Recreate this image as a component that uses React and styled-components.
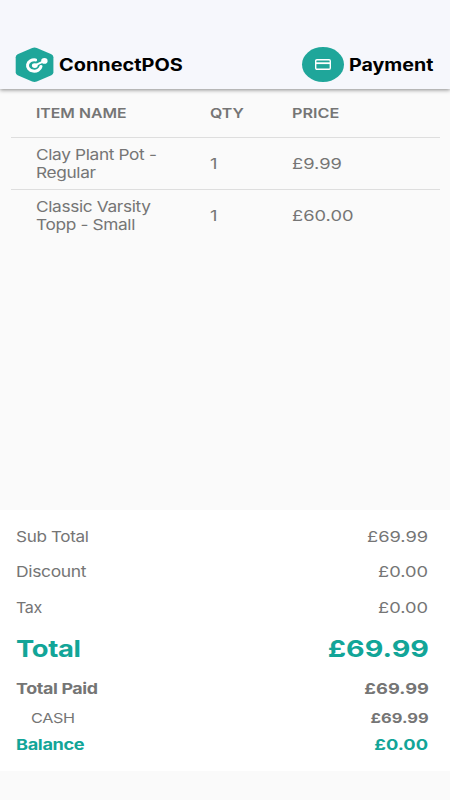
import React from "react";
import styled, { createGlobalStyle } from "styled-components";

const COLUMNS = [
  { label: "ITEM NAME", stretch: 1.17 },
  { label: "QTY", stretch: 1.18 },
  { label: "PRICE", stretch: 1.2 },
];

const ITEMS = [
  { name: ["Clay Plant Pot -", "Regular"], qty: "1", price: "£9.99" },
  { name: ["Classic Varsity", "Topp - Small"], qty: "1", price: "£60.00" },
];

const TOTALS = [
  { label: "Sub Total", value: "£69.99", height: 35, size: 15, stretch: 1.14 },
  { label: "Discount", value: "£0.00", height: 36, size: 15, stretch: 1.165 },
  { label: "Tax", value: "£0.00", height: 35, size: 15, stretch: 1.07 },
  { label: "Total", value: "£69.99", height: 47, size: 23.5, stretch: 1.165, bold: true, accent: true },
  { label: "Total Paid", value: "£69.99", height: 33, size: 15, stretch: 1.19, bold: true },
  { label: "CASH", value: "£69.99", height: 26, size: 13.5, stretch: 1.2, boldValue: true, indent: 15.5 },
  { label: "Balance", value: "£0.00", height: 27, size: 15, stretch: 1.21, bold: true, accent: true },
];

function LogoMark() {
  return (
    <svg width="40" height="36" viewBox="0 0 40 36">
      <path
        d="M17.2 0.9Q19.5 0 21.8 0.9L36.4 7.2Q38.4 8.2 38.4 10.2V25.2Q38.4 27.2 36.4 28.2L21.8 34.5Q19.5 35.4 17.2 34.5L2.6 28.2Q0.7 27.2 0.7 25.2V10.2Q0.7 8.2 2.6 7.2Z"
        fill="#1fa69a"
      />
      <path d="M20.6 12.9A6.8 5.7 0 1 0 26 19.4" fill="none" stroke="#fff" strokeWidth="3" strokeLinecap="round" />
      <path d="M20 18.4L29 14.2" stroke="#fff" strokeWidth="2" />
      <ellipse cx="19.8" cy="18.6" rx="2.9" ry="2.4" fill="#fff" />
      <ellipse cx="29.4" cy="13.9" rx="3.2" ry="2.8" fill="#fff" />
    </svg>
  );
}

function CardIcon() {
  return (
    <svg width="16" height="11" viewBox="0 0 16 11">
      <rect x="0.7" y="0.7" width="14.6" height="9.6" rx="1.2" fill="none" stroke="#fff" strokeWidth="1.4" />
      <path d="M1 4.2H15" stroke="#fff" strokeWidth="1.8" />
    </svg>
  );
}

export default function App() {
  return (
    <Page>
      <GlobalStyle />
      <Header>
        <Group>
          <LogoMark />
          <Wide $size={17} $weight={700} $stretch={1.17}>
            ConnectPOS
          </Wide>
        </Group>
        <Group $gap={5}>
          <Badge>
            <CardIcon />
          </Badge>
          <Wide $size={17} $weight={700} $stretch={1.155}>
            Payment
          </Wide>
        </Group>
      </Header>
      <Table>
        <HeadRow>
          {COLUMNS.map((col) => (
            <Wide key={col.label} $size={13.5} $weight={600} $stretch={col.stretch}>
              {col.label}
            </Wide>
          ))}
        </HeadRow>
        {ITEMS.map((item) => (
          <ItemRow key={item.price}>
            <Name>
              {item.name.map((line) => (
                <Wide key={line} $size={15} $stretch={1.15} $tracking={-0.3}>
                  {line}
                </Wide>
              ))}
            </Name>
            <Wide $size={15}>{item.qty}</Wide>
            <Wide $size={15}>{item.price}</Wide>
          </ItemRow>
        ))}
      </Table>
      <Summary>
        {TOTALS.map((row) => (
          <TotalRow key={row.label} $height={row.height} $indent={row.indent} $accent={row.accent}>
            <Wide $size={row.size} $weight={row.bold ? 700 : 400} $stretch={row.stretch} $tracking={-0.3}>
              {row.label}
            </Wide>
            <Wide $end $size={row.size} $weight={row.bold || row.boldValue ? 700 : 400}>
              {row.value}
            </Wide>
          </TotalRow>
        ))}
      </Summary>
    </Page>
  );
}

const GlobalStyle = createGlobalStyle`
  * { box-sizing: border-box; }
  body { margin: 0; }
`;

const Page = styled.main`
  display: flex;
  flex-direction: column;
  width: 450px;
  height: 800px;
  padding-bottom: 29px;
  overflow: hidden;
  background: #fafafa;
  color: #757575;
  font-family: Inter, sans-serif;
`;

// Expanded lettering: the face is widened horizontally.
const Wide = styled.span`
  display: block;
  width: max-content;
  font-size: ${(p) => p.$size}px;
  font-weight: ${(p) => p.$weight || 400};
  line-height: 18px;
  letter-spacing: ${(p) => p.$tracking || 0}px;
  white-space: nowrap;
  transform: scaleX(${(p) => p.$stretch || 1.22});
  transform-origin: ${(p) => (p.$end ? "right" : "left")} center;
`;

const Header = styled.header`
  display: flex;
  justify-content: space-between;
  flex: none;
  height: 89px;
  padding: 47px 28px 0 15px;
  background: #f6f7fc;
  color: #000;
  box-shadow: 0 1px 4px rgba(0, 0, 0, 0.45);
`;

const Group = styled.div`
  display: flex;
  align-items: center;
  gap: ${(p) => p.$gap || 4}px;
  height: 36px;
`;

const Badge = styled.span`
  display: flex;
  align-items: center;
  justify-content: center;
  width: 42px;
  height: 35px;
  margin-bottom: 1px;
  border-radius: 50%;
  background: #1fa69a;
`;

const Table = styled.section`
  flex: 1;
  padding: 0 10px 0 11px;
`;

const HeadRow = styled.div`
  display: grid;
  grid-template-columns: 174px 82.4px 1fr;
  align-items: center;
  height: 48px;
  padding-left: 25px;
`;

const ItemRow = styled(HeadRow)`
  height: 52px;
  border-top: 1px solid #dedede;
`;

const Name = styled.div`
  display: flex;
  flex-direction: column;
`;

const Summary = styled.section`
  flex: none;
  height: 261px;
  padding: 9px 21.5px 0 15.5px;
  background: #fff;
`;

const TotalRow = styled.div`
  display: flex;
  align-items: center;
  justify-content: space-between;
  height: ${(p) => p.$height}px;
  padding-left: ${(p) => p.$indent || 0}px;
  color: ${(p) => (p.$accent ? "#12a598" : "inherit")};
`;
